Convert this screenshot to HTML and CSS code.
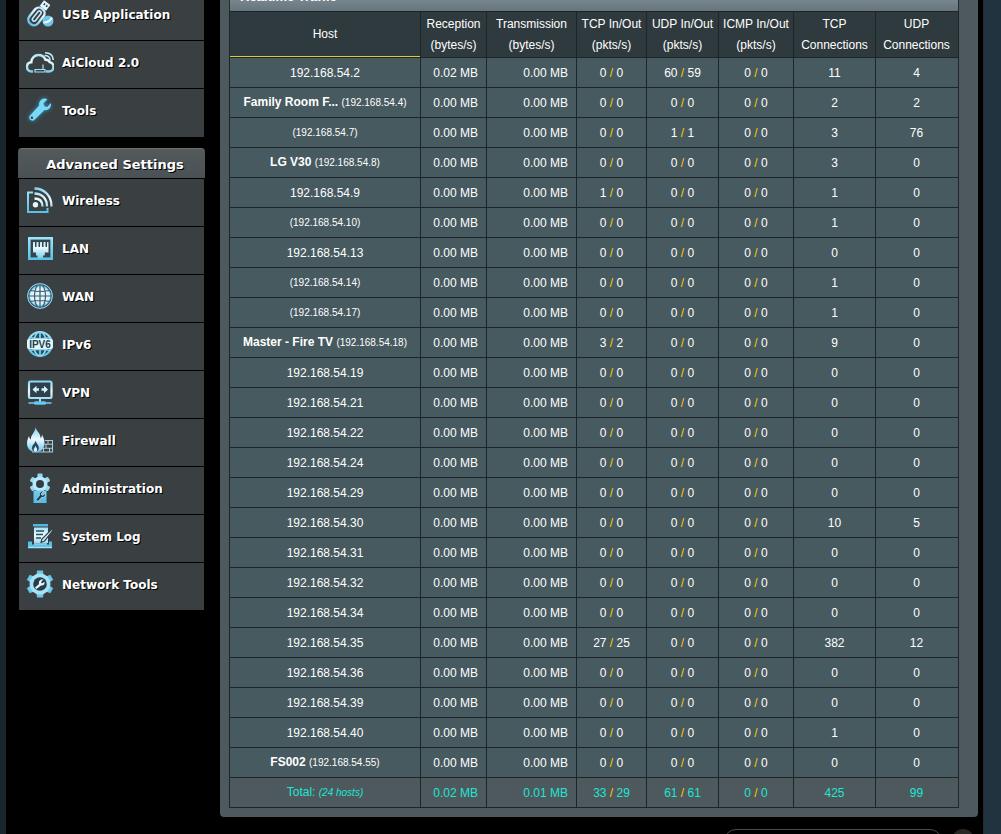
FILE: index.html
```html
<!DOCTYPE html>
<html lang="en">
<head>
<meta charset="utf-8">
<title>Realtime Traffic</title>
<link rel="stylesheet" href="styles.css">
</head>
<body>
<svg class="defs" width="0" height="0" aria-hidden="true">
  <defs>
    <linearGradient id="ice" gradientUnits="userSpaceOnUse" x1="0" y1="2" x2="0" y2="27"><stop offset="0" stop-color="#7fd3f2"/><stop offset=".45" stop-color="#eefaff"/><stop offset="1" stop-color="#5cc3ea"/></linearGradient>
    <linearGradient id="aqua" gradientUnits="userSpaceOnUse" x1="0" y1="2" x2="0" y2="27"><stop offset="0" stop-color="#a0e8fb"/><stop offset="1" stop-color="#55bfea"/></linearGradient>
  </defs>
</svg>
<div class="page">
  <nav class="sidebar">
    <ul class="menu">
      <li><a class="item item-first" href="#usb"><svg class="icon" viewBox="0 0 28 28"><g transform="rotate(38 13 14)"><rect x="7" y="8" width="11" height="19" rx="5" fill="none" stroke="url(#ice)" stroke-width="2.4"/><rect x="10.700" y="11" width="3.600" height="12" rx="1.800" fill="none" stroke="#bfeaff" stroke-width="1.600"/><path d="M8.500 0h8v7h-8z" fill="#e2f6ff"/><path d="M10.500 2h1.500v2h-1.500zM13.500 2H15v2h-1.500z" fill="#26414e"/></g><circle cx="22" cy="21" r="5.500" fill="#6fc6ea"/><path d="M17.500 22.500c4 0 7-2 8.500-5" fill="none" stroke="#e9f9ff" stroke-width="2"/></svg><span>USB Application</span></a></li>
      <li><a class="item" href="#aicloud"><svg class="icon" viewBox="0 0 28 28"><path d="M7 23.500H5.500C2.500 23.500 1 21.500 1 19c0-2.800 1.800-4.500 4.300-4.700C5.300 10 8.500 7 12.500 7c3.300 0 5.900 1.800 7 4.800 1.800-.2 3.300.5 4.200 2.300 2.300.5 3.800 2.300 3.800 4.700 0 2.700-1.900 4.700-4.500 4.700H20" fill="none" stroke="url(#ice)" stroke-width="2.400"/><path d="M9 21.500h10V24H9zM17 16.500v5" fill="none" stroke="#a9e2f8" stroke-width="1.200"/><path d="M18.500 7.500c3.500 0 5.500 2 5.700 5M19 4.800c5 0 8 2.700 8.300 7.200" fill="none" stroke="#c0ebfb" stroke-width="1.500"/></svg><span>AiCloud 2.0</span></a></li>
      <li><a class="item item-last" href="#tools"><svg class="icon glow" viewBox="0 0 28 28"><path d="M21.500 3.200l-4 4 .8 3 3 .7 3.500-4c1 4-2 7.800-6.300 7.200L8.500 23.800c-2.700 2.600-7.200-1.100-4.500-4.300L13.200 9.500C12.400 5.200 16.500 1 21.500 3.200z" fill="#78daf7"/><circle cx="5.900" cy="21.800" r="1.200" fill="#294650"/></svg><span>Tools</span></a></li>
    </ul>
    <h2 class="menu-title">Advanced Settings</h2>
    <ul class="menu">
      <li><a class="item" href="#wireless"><svg class="icon" viewBox="0 0 28 28"><path d="M7 6.500H2V26h19.500v-4" fill="none" stroke="url(#aqua)" stroke-width="2"/><circle cx="9.500" cy="18.800" r="2.700" fill="#e4f7ff"/><path d="M8.500 12.500c5 0 8 3 8 8M8.500 7.500c7.500 0 12.500 5 12.500 13M8.500 2.500c10 0 17 7.500 17 18" fill="none" stroke="url(#ice)" stroke-width="2.300"/></svg><span>Wireless</span></a></li>
      <li><a class="item" href="#lan"><svg class="icon" viewBox="0 0 28 28"><rect x="3.300" y="4.300" width="22.400" height="20.400" fill="#36454c" stroke="url(#aqua)" stroke-width="2.600"/><path d="M7 8h2v5h1.500V8h2v5H14V8h2v5h1.500V8h2v5H21V8h1.500v10.500h-3.700v3H17V24h-5.500v-2.500H10v-3H7z" fill="url(#ice)"/></svg><span>LAN</span></a></li>
      <li><a class="item" href="#wan"><svg class="icon" viewBox="0 0 28 28"><circle cx="14" cy="14" r="12.500" fill="#8bcdea"/><ellipse cx="14" cy="14" rx="10" ry="9" fill="#e1f4fc"/><g fill="none" stroke="#3a5c70" stroke-width="1.200"><circle cx="14" cy="14" r="11.300"/><ellipse cx="14" cy="14" rx="5.500" ry="12"/><path d="M14 2v24M2 14h24M4.500 8.500q9.500 2 19 0M4.500 19.500q9.500-2 19 0"/></g><circle cx="14" cy="14" r="12.400" fill="none" stroke="#83cff0" stroke-width="1"/></svg><span>WAN</span></a></li>
      <li><a class="item" href="#ipv6"><svg class="icon" viewBox="0 0 28 28"><circle cx="14" cy="14" r="12" fill="#2f505d" stroke="url(#aqua)" stroke-width="2"/><path d="M14 2v24M4 7.500q10 2.500 20 0M4 20.500q10-2.500 20 0" fill="none" stroke="#8ad9f5" stroke-width="1.600"/><ellipse cx="14" cy="14" rx="6.500" ry="12" fill="none" stroke="#8ad9f5" stroke-width="1.600"/><rect x="1" y="9" width="26" height="10" rx="2" fill="#e1f5fd"/><text class="icon-text" x="14" y="17.600" text-anchor="middle">IPV6</text></svg><span>IPv6</span></a></li>
      <li><a class="item" href="#vpn"><svg class="icon" viewBox="0 0 28 28"><rect x="3" y="3.500" width="22.500" height="16.500" rx="1.500" fill="#2d414a" stroke="url(#ice)" stroke-width="2.200"/><path d="M6.500 11.500l4-3.700v2.500H13v2.400h-2.500v2.500zM22 11.500l-4-3.700v2.500h-2.500v2.400H18v2.500z" fill="#d6f3ff"/><path d="M14 20v4" stroke="#9be1f8" stroke-width="2"/><path d="M2.500 25h23" stroke="#56bfe8" stroke-width="1.800"/><rect x="8" y="23.200" width="12" height="3.600" rx="1.500" fill="#62c9ef"/></svg><span>VPN</span></a></li>
      <li><a class="item" href="#firewall"><svg class="icon" viewBox="0 0 28 28"><path d="M9.500 1c.5 4 5.500 6.500 5 11 1.300-.8 1.600-2.300 1.400-3.800 2.300 4.300 3.500 8.300 2.100 12.300-1 3-3.500 5.500-8 5.500-5.500 0-9-3.200-9-8.500 0-3 1-5.500 2-7.500.2 1.700.8 2.800 1.800 3.500C4.500 9 9.500 6 9.500 1z" fill="url(#ice)"/><path d="M9.500 14.500c.5 2.500 3.300 4.300 3.300 7.500 0 2-1.300 4-3.300 4s-3.500-1.800-3.500-4c0-3 3.200-4.500 3.500-7.500z" fill="#25485a"/><path d="M9.500 19.500c.3 1.700 1.700 2.700 1.700 4.300 0 1.200-.7 2.200-1.700 2.200s-1.800-1-1.800-2.200c0-1.600 1.600-2.600 1.800-4.300z" fill="#d6f2fd"/><path d="M19 14.500h7.500V26H6M18.500 18.300h8M16 22.200h10.500M22 14.500v3.800M20 18.300v3.900M23.500 22.200V26M17.500 22.200V26" fill="none" stroke="#a4ccda" stroke-width="1.100"/></svg><span>Firewall</span></a></li>
      <li><a class="item" href="#administration"><svg class="icon icon-tall" viewBox="0 0 28 30"><g transform="translate(14 11)"><g fill="#93daf4"><rect x="-2.500" y="-10.500" width="5" height="21" rx="1"/><rect x="-2.500" y="-10.500" width="5" height="21" rx="1" transform="rotate(60)"/><rect x="-2.500" y="-10.500" width="5" height="21" rx="1" transform="rotate(120)"/></g><circle r="7.500" fill="#b9e8fa"/><circle r="4" fill="#303d42"/></g><path d="M7.500 17.500h13V30h-13z" fill="url(#aqua)"/><path d="M18 18l-3 3 1.500 1.500 3-2.500c.5 3-1.500 5-4 4.500L12 28.500l-2-2 3.500-4c-.7-2.800 1.500-4.500 4.500-4.500z" fill="#243f4d" stroke="#d8f4ff" stroke-width=".6"/></svg><span>Administration</span></a></li>
      <li><a class="item" href="#log"><svg class="icon" viewBox="0 0 28 28"><path d="M7 2h15v2.500H7z" fill="#53b6df"/><path d="M8 5.500h14V21H8z" fill="url(#ice)"/><path d="M10 9h8M10 12.500h7M10 16h5" stroke="#2d4b58" stroke-width="1.600"/><path d="M26.500 6.500L16 17l-1 3.500 3.500-1.500L27 8.500z" fill="#d7f3fe" stroke="#2f4048" stroke-width="1.200"/><path d="M2 19.500v6h24v-6h-3v3H6v-3z" fill="#58bfe9"/><path d="M2 25.500h24M8 22h13" stroke="#9de4fa" stroke-width="1.600"/></svg><span>System Log</span></a></li>
      <li><a class="item" href="#nettools"><svg class="icon" viewBox="0 0 28 28"><g transform="translate(14 14)"><g fill="#68c9ec"><path d="M-3-13.500h6L4.500 0 3 13.500h-6L-4.500 0z"/><path d="M-3-13.500h6L4.500 0 3 13.500h-6L-4.500 0z" transform="rotate(60)"/><path d="M-3-13.500h6L4.500 0 3 13.500h-6L-4.500 0z" transform="rotate(120)"/></g><circle r="10.500" fill="#a8e2f7"/><circle r="6.800" fill="#293d48"/><path d="M3.500-4.500L1-2 2-.5l2.500-1.800c.5 2.600-1 4.300-3.500 3.800L-3.500 5-5 3.500-1 0c-.7-2.800 1.200-5 4.500-4.500z" fill="#e2f7ff"/></g></svg><span>Network Tools</span></a></li>
    </ul>
  </nav>
  <main class="content">
    <section class="panel">
      <div class="panel-title"><span>Realtime Traffic</span></div>
      <table class="traffic">
        <colgroup><col class="c-host"><col class="c-rx"><col class="c-tx"><col class="c-tcp"><col class="c-udp"><col class="c-icmp"><col class="c-tcp-conn"><col class="c-udp-conn"></colgroup>
        <thead>
          <tr><th class="sorted">Host</th><th>Reception (bytes/s)</th><th>Transmission (bytes/s)</th><th>TCP In/Out (pkts/s)</th><th>UDP In/Out (pkts/s)</th><th>ICMP In/Out (pkts/s)</th><th>TCP Connections</th><th>UDP Connections</th></tr>
        </thead>
        <tbody>
          <tr><td>192.168.54.2</td><td class="num">0.02 MB</td><td class="num">0.00 MB</td><td>0 <i>/</i> 0</td><td>60 <i>/</i> 59</td><td>0 <i>/</i> 0</td><td>11</td><td>4</td></tr>
          <tr><td class="named"><b>Family Room F...</b> <small>(192.168.54.4)</small></td><td class="num">0.00 MB</td><td class="num">0.00 MB</td><td>0 <i>/</i> 0</td><td>0 <i>/</i> 0</td><td>0 <i>/</i> 0</td><td>2</td><td>2</td></tr>
          <tr><td class="named"><small>(192.168.54.7)</small></td><td class="num">0.00 MB</td><td class="num">0.00 MB</td><td>0 <i>/</i> 0</td><td>1 <i>/</i> 1</td><td>0 <i>/</i> 0</td><td>3</td><td>76</td></tr>
          <tr><td class="named"><b>LG V30</b> <small>(192.168.54.8)</small></td><td class="num">0.00 MB</td><td class="num">0.00 MB</td><td>0 <i>/</i> 0</td><td>0 <i>/</i> 0</td><td>0 <i>/</i> 0</td><td>3</td><td>0</td></tr>
          <tr><td>192.168.54.9</td><td class="num">0.00 MB</td><td class="num">0.00 MB</td><td>1 <i>/</i> 0</td><td>0 <i>/</i> 0</td><td>0 <i>/</i> 0</td><td>1</td><td>0</td></tr>
          <tr><td class="named"><small>(192.168.54.10)</small></td><td class="num">0.00 MB</td><td class="num">0.00 MB</td><td>0 <i>/</i> 0</td><td>0 <i>/</i> 0</td><td>0 <i>/</i> 0</td><td>1</td><td>0</td></tr>
          <tr><td>192.168.54.13</td><td class="num">0.00 MB</td><td class="num">0.00 MB</td><td>0 <i>/</i> 0</td><td>0 <i>/</i> 0</td><td>0 <i>/</i> 0</td><td>0</td><td>0</td></tr>
          <tr><td class="named"><small>(192.168.54.14)</small></td><td class="num">0.00 MB</td><td class="num">0.00 MB</td><td>0 <i>/</i> 0</td><td>0 <i>/</i> 0</td><td>0 <i>/</i> 0</td><td>1</td><td>0</td></tr>
          <tr><td class="named"><small>(192.168.54.17)</small></td><td class="num">0.00 MB</td><td class="num">0.00 MB</td><td>0 <i>/</i> 0</td><td>0 <i>/</i> 0</td><td>0 <i>/</i> 0</td><td>1</td><td>0</td></tr>
          <tr><td class="named"><b>Master - Fire TV</b> <small>(192.168.54.18)</small></td><td class="num">0.00 MB</td><td class="num">0.00 MB</td><td>3 <i>/</i> 2</td><td>0 <i>/</i> 0</td><td>0 <i>/</i> 0</td><td>9</td><td>0</td></tr>
          <tr><td>192.168.54.19</td><td class="num">0.00 MB</td><td class="num">0.00 MB</td><td>0 <i>/</i> 0</td><td>0 <i>/</i> 0</td><td>0 <i>/</i> 0</td><td>0</td><td>0</td></tr>
          <tr><td>192.168.54.21</td><td class="num">0.00 MB</td><td class="num">0.00 MB</td><td>0 <i>/</i> 0</td><td>0 <i>/</i> 0</td><td>0 <i>/</i> 0</td><td>0</td><td>0</td></tr>
          <tr><td>192.168.54.22</td><td class="num">0.00 MB</td><td class="num">0.00 MB</td><td>0 <i>/</i> 0</td><td>0 <i>/</i> 0</td><td>0 <i>/</i> 0</td><td>0</td><td>0</td></tr>
          <tr><td>192.168.54.24</td><td class="num">0.00 MB</td><td class="num">0.00 MB</td><td>0 <i>/</i> 0</td><td>0 <i>/</i> 0</td><td>0 <i>/</i> 0</td><td>0</td><td>0</td></tr>
          <tr><td>192.168.54.29</td><td class="num">0.00 MB</td><td class="num">0.00 MB</td><td>0 <i>/</i> 0</td><td>0 <i>/</i> 0</td><td>0 <i>/</i> 0</td><td>0</td><td>0</td></tr>
          <tr><td>192.168.54.30</td><td class="num">0.00 MB</td><td class="num">0.00 MB</td><td>0 <i>/</i> 0</td><td>0 <i>/</i> 0</td><td>0 <i>/</i> 0</td><td>10</td><td>5</td></tr>
          <tr><td>192.168.54.31</td><td class="num">0.00 MB</td><td class="num">0.00 MB</td><td>0 <i>/</i> 0</td><td>0 <i>/</i> 0</td><td>0 <i>/</i> 0</td><td>0</td><td>0</td></tr>
          <tr><td>192.168.54.32</td><td class="num">0.00 MB</td><td class="num">0.00 MB</td><td>0 <i>/</i> 0</td><td>0 <i>/</i> 0</td><td>0 <i>/</i> 0</td><td>0</td><td>0</td></tr>
          <tr><td>192.168.54.34</td><td class="num">0.00 MB</td><td class="num">0.00 MB</td><td>0 <i>/</i> 0</td><td>0 <i>/</i> 0</td><td>0 <i>/</i> 0</td><td>0</td><td>0</td></tr>
          <tr><td>192.168.54.35</td><td class="num">0.00 MB</td><td class="num">0.00 MB</td><td>27 <i>/</i> 25</td><td>0 <i>/</i> 0</td><td>0 <i>/</i> 0</td><td>382</td><td>12</td></tr>
          <tr><td>192.168.54.36</td><td class="num">0.00 MB</td><td class="num">0.00 MB</td><td>0 <i>/</i> 0</td><td>0 <i>/</i> 0</td><td>0 <i>/</i> 0</td><td>0</td><td>0</td></tr>
          <tr><td>192.168.54.39</td><td class="num">0.00 MB</td><td class="num">0.00 MB</td><td>0 <i>/</i> 0</td><td>0 <i>/</i> 0</td><td>0 <i>/</i> 0</td><td>0</td><td>0</td></tr>
          <tr><td>192.168.54.40</td><td class="num">0.00 MB</td><td class="num">0.00 MB</td><td>0 <i>/</i> 0</td><td>0 <i>/</i> 0</td><td>0 <i>/</i> 0</td><td>1</td><td>0</td></tr>
          <tr><td class="named"><b>FS002</b> <small>(192.168.54.55)</small></td><td class="num">0.00 MB</td><td class="num">0.00 MB</td><td>0 <i>/</i> 0</td><td>0 <i>/</i> 0</td><td>0 <i>/</i> 0</td><td>0</td><td>0</td></tr>
        </tbody>
        <tfoot>
          <tr><td class="named">Total: <small><em>(24 hosts)</em></small></td><td class="num">0.02 MB</td><td class="num">0.01 MB</td><td>33 <i>/</i> 29</td><td>61 <i>/</i> 61</td><td>0 <i>/</i> 0</td><td>425</td><td>99</td></tr>
        </tfoot>
      </table>
    </section>
    <footer class="footer">
      <input class="search" type="text" aria-label="Search FAQ">
      <button class="go" type="button" aria-label="Search"></button>
    </footer>
  </main>
</div>
</body>
</html>
```
FILE: styles.css
```css
* {
  box-sizing: border-box;
}

body {
  margin: 0;
  height: 100vh;
  overflow: hidden;
  background: #21333f;
  color: #fff;
  font: 12px/21px "Liberation Sans", Arial, sans-serif;
}

.defs {
  display: block;
}

.page {
  display: flex;
  gap: 15px;
  min-height: 100vh;
  margin: 0 17px 0 0;
  padding: 0 5px 0 12px;
  border-left: 6px solid #1a262e;
  border-right: 1px solid #252b2e;
  background: #000;
}

/* Sidebar */

.sidebar {
  flex: 0 0 187px;
  font-family: "DejaVu Sans", Verdana, sans-serif;
  font-weight: bold;
  text-shadow: 1px 1px 0 #000;
}

.menu {
  margin: 0 1px;
  padding: 0;
  list-style: none;
}

.item {
  display: flex;
  align-items: center;
  gap: 8px;
  height: 48px;
  padding: 0 0 6px 7px;
  border-bottom: 1px solid #000;
  background: #3a3f41;
  color: #fff;
  font-size: 12px;
  text-decoration: none;
}

.item span {
  padding-top: 3px;
}

.item-first {
  height: 41px;
  padding-bottom: 12px;
}

.item-last {
  border-bottom-color: #3a3f41;
}

.icon {
  flex: none;
  width: 28px;
  height: 28px;
}

.icon-tall {
  height: 30px;
}

.glow {
  filter: drop-shadow(0 0 2px #2a9fd0);
}

.icon-text {
  fill: #263c47;
  font: bold 10px "Liberation Sans", Arial, sans-serif;
  text-shadow: none;
}

.menu-title {
  height: 31px;
  margin: 11px 0 0;
  padding: 1px 0 0 7px;
  border-top: 1px solid #6a6f71;
  border-bottom: 1px solid #000;
  border-radius: 4px 4px 0 0;
  background: linear-gradient(#54595b, #4a5154);
  font-size: 13px;
  line-height: 30px;
  text-align: center;
}

/* Content */

.content {
  flex: 1;
  min-width: 0;
}

.panel {
  padding: 0 19px 9px 9px;
  border-radius: 0 0 4px 4px;
  background: #4d595d;
}

.panel-title {
  display: flex;
  align-items: flex-end;
  height: 11px;
  padding: 0 0 4px 10px;
  border: solid #222b2e;
  border-width: 0 1px;
  background: linear-gradient(#78868d, #66757b);
  font-size: 13px;
  font-weight: bold;
}

.traffic {
  width: 100%;
  table-layout: fixed;
  border-collapse: collapse;
  text-align: center;
}

.c-host { width: 191px; }
.c-rx { width: 66px; }
.c-tx { width: 90px; }
.c-tcp { width: 70px; }
.c-udp { width: 72px; }
.c-icmp { width: 75px; }
.c-tcp-conn { width: 82px; }
.c-udp-conn { width: 83px; }

.traffic th,
.traffic td {
  padding: 0 2px;
  border: 1px solid #1c2529;
}

.traffic th {
  height: 46px;
  background: #2f3a3e;
  font-weight: normal;
}

.traffic th:last-child,
.traffic td:last-child {
  padding-right: 3px;
}

.traffic th.sorted {
  box-shadow: inset 0 -1px 0 #e6c92a;
}

.traffic td {
  height: 30px;
  padding-top: 2px;
  background: #475a5f;
  white-space: nowrap;
}

.traffic td.named {
  padding-top: 0;
}

.traffic td.num {
  padding-right: 8px;
  text-align: right;
}

.traffic i {
  color: #fc0;
  font-style: normal;
}

.traffic small {
  font-size: 10px;
}

.traffic tfoot td {
  background: #4d595d;
  color: #1fe5d5;
}

/* Footer */

.footer {
  display: flex;
  justify-content: flex-end;
  gap: 10px;
  padding: 12px 4px 0 0;
}

.search {
  width: 218px;
  height: 26px;
  border: 1px solid #4a4a4a;
  border-radius: 12px;
  background: #000;
  color: #fff;
}

.go {
  width: 22px;
  height: 22px;
  padding: 0;
  border: 0;
  border-radius: 50%;
  background: #292724;
}
```
